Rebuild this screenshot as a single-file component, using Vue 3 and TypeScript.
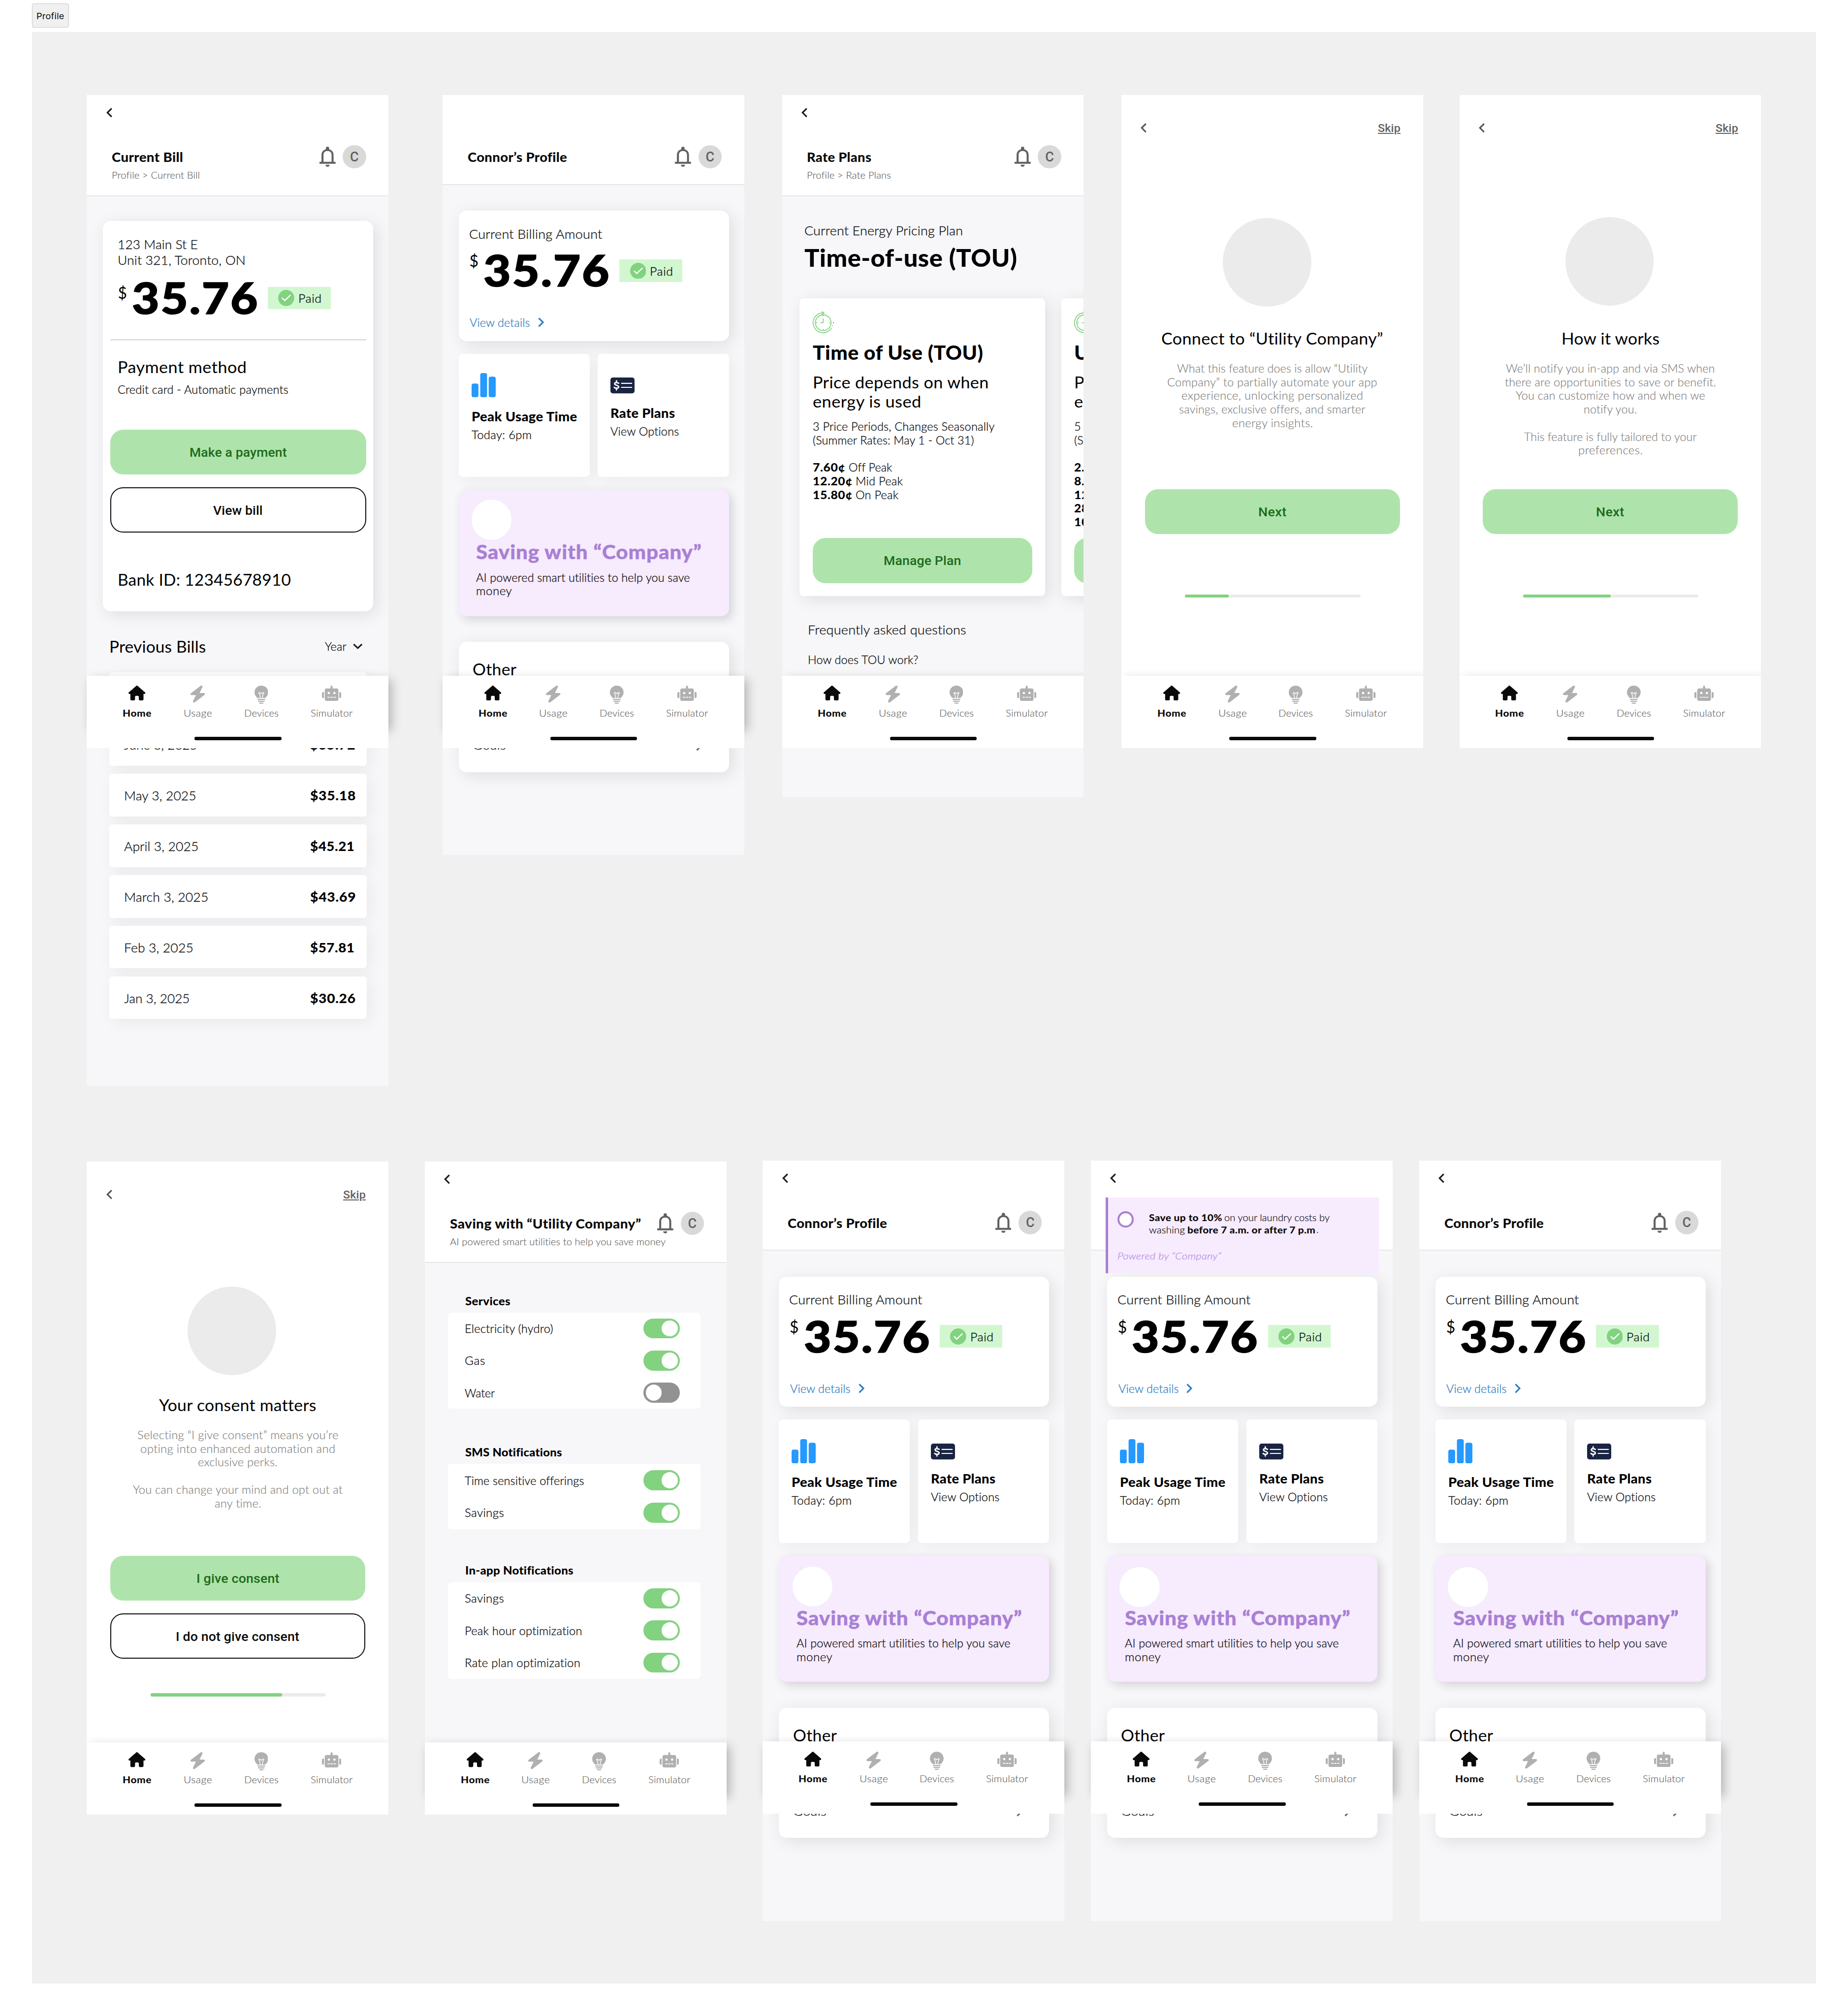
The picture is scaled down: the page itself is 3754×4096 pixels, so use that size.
<script setup lang="ts">
import { defineComponent, h, type Directive } from 'vue'

type Line = [text: string, width: number]

const canvas = document.createElement('canvas').getContext('2d')!

/** Fits a text run to a pixel width: part of the difference goes into the glyphs, the rest into tracking. */
const vFit: Directive<HTMLElement, number> = {
  mounted(el, { value }) {
    const text = el.textContent ?? ''
    const cs = getComputedStyle(el)
    canvas.font = `${cs.fontStyle} ${cs.fontWeight} 200px ${cs.fontFamily}`
    const m = canvas.measureText(text)
    const target = value / parseFloat(cs.fontSize)
    const ink = (m.actualBoundingBoxRight + m.actualBoundingBoxLeft) / 200
    const stretch = 1 + (target / ink - 1) * 0.65
    const ls = (target / stretch - ink) / Math.max(1, text.length - 1)
    const overhang = target - target / stretch - ls
    el.style.display = 'inline-block'
    el.style.transformOrigin = '0 50%'
    el.style.transform = `translateY(1.2px) scaleX(${stretch.toFixed(4)})`
    el.style.letterSpacing = `${ls.toFixed(4)}em`
    el.style.marginRight = `${overhang.toFixed(4)}em`
  },
}

const tabs = [
  { name: 'Home', w: 69 },
  { name: 'Usage', w: 67 },
  { name: 'Devices', w: 82 },
  { name: 'Simulator', w: 103 },
]

const TabIcon = defineComponent({
  props: { name: { type: String, required: true } },
  setup(props) {
    return () => {
      switch (props.name) {
        case 'Home':
          return h('svg', { width: 42, height: 37, viewBox: '0 0 576 512', preserveAspectRatio: 'none', fill: '#0a0a0a' }, [
            h('path', { d: 'M575.8 255.5c0 18-15 32.1-32 32.1h-32l.7 160.2c0 2.7-.2 5.4-.5 8.1V472c0 22.1-17.9 40-40 40H456c-1.1 0-2.2 0-3.3-.1c-1.4 .1-2.8 .1-4.2 .1H416 392c-22.1 0-40-17.9-40-40V448 384c0-17.7-14.3-32-32-32H256c-17.7 0-32 14.3-32 32v64 24c0 22.1-17.9 40-40 40H160 128.1c-1.5 0-3-.1-4.5-.2c-1.2 .1-2.4 .2-3.6 .2H104c-22.1 0-40-17.9-40-40V360c0-.9 0-1.9 .1-2.8V287.6H32c-18 0-32-14-32-32.1c0-9 3-17 10-24L266.4 8c7-7 15-8 22-8s15 2 21 7L564.8 231.5c8 7 12 15 11 24z' }),
          ])
        case 'Usage':
          return h('svg', { width: 36, height: 42, viewBox: '32 0 384 512', preserveAspectRatio: 'none', fill: '#b0b0b0' }, [
            h('path', { d: 'M349.4 44.6c5.9-13.7 1.5-29.7-10.6-38.5s-28.6-8-39.9 1.8l-256 224c-10 8.8-13.6 22.9-8.9 35.3S50.7 288 64 288H175.5L98.6 467.4c-5.9 13.7-1.5 29.7 10.6 38.5s28.6 8 39.9-1.8l256-224c10-8.8 13.6-22.9 8.9-35.3s-16.6-20.7-30-20.7H272.5L349.4 44.6z' }),
          ])
        case 'Devices':
          return h('svg', { width: 34, height: 46, viewBox: '0 0 34 46', fill: '#b0b0b0' }, [
            h('path', { d: 'M17 0C7.6 0 0 7.2 0 16.4c0 6.2 3 10.4 7.6 14.6H26.4C31 26.8 34 22.6 34 16.4 34 7.2 26.4 0 17 0Z' }),
            h('path', { d: 'M14.500 31 12.800 21.500 10.500 18.500c1.500-2.500 4-1 6.500 1.800 2.500-2.800 5-4.300 6.500-1.800L21.200 21.500 19.500 31', fill: 'none', stroke: '#fff', 'stroke-width': 1.8 }),
            h('path', { d: 'M8.500 34.400H25.500M10 39H24M13 43.600H21', stroke: '#b0b0b0', 'stroke-width': 2.8, 'stroke-linecap': 'round' }),
          ])
        default:
          return h('svg', { width: 48, height: 38, viewBox: '0 0 48 38', fill: '#b0b0b0' }, [
            h('rect', { x: 7, y: 7, width: 34, height: 31, rx: 5 }),
            h('rect', { x: 21.5, y: 0, width: 5, height: 10, rx: 2.5 }),
            h('path', { d: 'M5 16v15H3.500A3.500 3.500 0 0 1 0 27.500v-8A3.500 3.500 0 0 1 3.500 16ZM43 16v15h1.500a3.500 3.500 0 0 0 3.500-3.500v-8a3.500 3.500 0 0 0-3.500-3.500Z' }),
            h('circle', { cx: 17, cy: 18.5, r: 3, fill: '#fff' }),
            h('circle', { cx: 31, cy: 18.5, r: 3, fill: '#fff' }),
            h('path', { d: 'M14.500 29h4M22 29h4M29.500 29h4', stroke: '#fff', 'stroke-width': 2.2, 'stroke-linecap': 'round' }),
          ])
      }
    }
  },
})

const Chevron = defineComponent({
  props: { dir: { type: String, default: 'left' }, color: { type: String, default: '#1c1b1f' } },
  setup(props) {
    const shapes: Record<string, [number, number, string]> = {
      left: [15, 24, 'M13.200 1.600 2.800 12 13.200 22.400'],
      right: [15, 24, 'M1.800 1.600 12.200 12 1.800 22.400'],
      down: [24, 15, 'M1.800 2.200 12 12 22.200 2.200'],
    }
    return () => {
      const [w, ht, d] = shapes[props.dir]
      return h('svg', { width: w, height: ht, viewBox: `0 0 ${w} ${ht}`, style: 'display:block' }, [
        h('path', { d, fill: 'none', stroke: props.color, 'stroke-width': 3.9 }),
      ])
    }
  },
})

interface Screen {
  id: number
  kind: 'bill' | 'profile' | 'plans' | 'intro' | 'settings'
  x: number
  y: number
  h: number
  clip?: boolean
  back?: boolean
  title?: Line
  sub?: Line
  banner?: boolean
  heading?: Line
  circle?: [number, number]
  copy?: Line[]
  actions?: Line[]
  progress?: number
  blob?: [number, number]
}

const screens: Screen[] = [
  { id: 1, kind: 'bill', x: 216, y: 236, h: 2464, back: true, title: ['Current Bill', 174.6], sub: ['Profile > Current Bill', 214] },
  { id: 2, kind: 'profile', x: 1100, y: 236, h: 1890, title: ['Connor’s Profile', 245], blob: [72, 24] },
  { id: 3, kind: 'plans', x: 1944, y: 236, h: 1746, clip: true, back: true, title: ['Rate Plans', 157], sub: ['Profile > Rate Plans', 205] },
  {
    id: 4, kind: 'intro', x: 2788, y: 236, h: 1624, clip: true,
    circle: [252, 306], heading: ['Connect to “Utility Company”', 549.6],
    copy: [['What this feature does is allow “Utility', 474], ['Company” to partially automate your app', 522], ['experience, unlocking personalized', 448], ['savings, exclusive offers, and smarter', 461], ['energy insights.', 198]],
    actions: [['Next', 67]], progress: 25,
  },
  {
    id: 5, kind: 'intro', x: 3628, y: 236, h: 1624, clip: true,
    circle: [263, 304], heading: ['How it works', 240],
    copy: [['We’ll notify you in-app and via SMS when', 520], ['there are opportunities to save or benefit.', 523], ['You can customize how and when we', 471], ['notify you.', 130], ['', 0], ['This feature is fully tailored to your', 430], ['preferences.', 156]],
    actions: [['Next', 67]], progress: 50,
  },
  {
    id: 6, kind: 'intro', x: 216, y: 2888, h: 1624, clip: true,
    circle: [250, 311], heading: ['Your consent matters', 389],
    copy: [['Selecting “I give consent” means you’re', 499], ['opting into enhanced automation and', 482], ['exclusive perks.', 194.5], ['', 0], ['You can change your mind and opt out at', 522], ['any time.', 114]],
    actions: [['I give consent', 203], ['I do not give consent', 304]], progress: 75,
  },
  { id: 7, kind: 'settings', x: 1056, y: 2888, h: 1624, back: true, title: ['Saving with “Utility Company”', 476], sub: ['AI powered smart utilities to help you save money', 537] },
  { id: 8, kind: 'profile', x: 1896, y: 2886, h: 1890, back: true, title: ['Connor’s Profile', 245], blob: [74, 27] },
  { id: 9, kind: 'profile', x: 2712, y: 2886, h: 1890, back: true, banner: true, title: ['Connor’s Profile', 245], blob: [71, 28] },
  { id: 10, kind: 'profile', x: 3528, y: 2886, h: 1890, back: true, title: ['Connor’s Profile', 245], blob: [71, 28] },
]

const bills: { date: Line; amount: Line }[] = [
  { date: ['July 3, 2025', 168], amount: ['$41.07', 111] },
  { date: ['June 3, 2025', 179.6], amount: ['$35.72', 110] },
  { date: ['May 3, 2025', 174.6], amount: ['$35.18', 111] },
  { date: ['April 3, 2025', 182.5], amount: ['$45.21', 107.5] },
  { date: ['March 3, 2025', 204], amount: ['$43.69', 111] },
  { date: ['Feb 3, 2025', 166.6], amount: ['$57.81', 107.5] },
  { date: ['Jan 3, 2025', 160.7], amount: ['$30.26', 111] },
]

const plans: { name: Line; lead: Line[]; periods: Line[]; rates: { price: Line; label: Line }[] }[] = [
  {
    name: ['Time of Use (TOU)', 422],
    lead: [['Price depends on when', 432], ['energy is used', 266]],
    periods: [['3 Price Periods, Changes Seasonally', 450], ['(Summer Rates: May 1 - Oct 31)', 399]],
    rates: [
      { price: ['7.60¢', 78], label: ['Off Peak', 105.5] },
      { price: ['12.20¢', 95.5], label: ['Mid Peak', 114] },
      { price: ['15.80¢', 95.5], label: ['On Peak', 104.5] },
    ],
  },
  {
    name: ['Ultra-Low Overnight', 480],
    lead: [['Price depends on when', 432], ['energy is used', 266]],
    periods: [['5 Price Periods, Changes Seasonally', 450], ['(Summer Rates: May 1 - Oct 31)', 399]],
    rates: [
      { price: ['2.80¢', 78], label: ['Overnight', 120] },
      { price: ['8.70¢', 78], label: ['Off Peak', 105.5] },
      { price: ['12.20¢', 95.5], label: ['Mid Peak', 114] },
      { price: ['28.60¢', 95.5], label: ['On Peak', 104.5] },
      { price: ['10.30¢', 95.5], label: ['Tier', 50] },
    ],
  },
]

const groups: { name: Line; tall: number; rows: { label: Line; on: boolean }[] }[] = [
  { name: ['Services', 111], tall: 238, rows: [{ label: ['Electricity (hydro)', 216], on: true }, { label: ['Gas', 47.6], on: true }, { label: ['Water', 74], on: false }] },
  { name: ['SMS Notifications', 240], tall: 162, rows: [{ label: ['Time sensitive offerings', 294.5], on: true }, { label: ['Savings', 95], on: true }] },
  { name: ['In-app Notifications', 266.7], tall: 240, rows: [{ label: ['Savings', 95], on: true }, { label: ['Peak hour optimization', 288.6], on: true }, { label: ['Rate plan optimization', 283.4], on: true }] },
]
</script>

<template>
  <main class="page">
    <div class="tag"><span v-fit="66">Profile</span></div>
    <div class="board">
      <section
        v-for="s in screens"
        :key="s.id"
        class="screen"
        :class="[s.kind, { clip: s.clip }]"
        :style="{ left: s.x - 80 + 'px', top: s.y - 80 + 'px', height: s.h + 'px' }"
      >
        <header v-if="s.title" class="head" :class="{ tall: s.sub }">
          <div class="back"><Chevron v-if="s.back" /></div>
          <div v-if="!s.banner" class="head-row">
            <h1><span v-fit="s.title[1]">{{ s.title[0] }}</span></h1>
            <svg class="bell" width="40" height="50" viewBox="0 0 40 50" fill="#616161">
              <path d="M0 37.500H5V20.500C5 13 9.500 8 16 6.300V4a4 4 0 0 1 8 0V6.300C30.500 8 35 13 35 20.500V37.500H40V42.500H0ZM10 37.500H30V20.500C30 14.500 26 10.800 20 10.800S10 14.500 10 20.500Z" fill-rule="evenodd" />
              <path d="M15 45H25A5 5 0 0 1 15 45Z" />
            </svg>
            <span class="avatar">C</span>
          </div>
          <p v-if="s.sub" class="sub"><span v-fit="s.sub[1]">{{ s.sub[0] }}</span></p>
        </header>

        <template v-if="s.kind === 'bill'">
          <div class="card invoice">
            <p class="t32"><span v-fit="194.5">123 Main St E</span></p>
            <p class="t32"><span v-fit="313">Unit 321, Toronto, ON</span></p>
            <div class="amount">
              <span class="cur">$</span>
              <strong><span v-fit="307">35.76</span></strong>
              <span class="paid">
                <svg width="40" height="40" viewBox="0 0 40 40"><circle cx="20" cy="20" r="20" fill="#82d280" /><path d="M10.500 20.500 16.500 26.500 30 13.500" fill="none" stroke="#fff" stroke-width="3" stroke-linecap="round" stroke-linejoin="round" /></svg>
                <span v-fit="52">Paid</span>
              </span>
            </div>
            <hr />
            <p class="t40"><span v-fit="314">Payment method</span></p>
            <p class="t28 method"><span v-fit="423">Credit card - Automatic payments</span></p>
            <button class="btn fill"><span v-fit="239">Make a payment</span></button>
            <button class="btn line"><span v-fit="121">View bill</span></button>
            <p class="t40 bank"><span v-fit="426">Bank ID: 12345678910</span></p>
          </div>
          <div class="prev">
            <h2 class="t40"><span v-fit="235">Previous Bills</span></h2>
            <span class="year t28"><span v-fit="53">Year</span></span>
            <Chevron dir="down" />
          </div>
          <ul class="bills">
            <li v-for="b in bills" :key="b.date[0]">
              <span v-fit="b.date[1]" class="date">{{ b.date[0] }}</span>
              <b><span v-fit="b.amount[1]">{{ b.amount[0] }}</span></b>
            </li>
          </ul>
        </template>

        <template v-else-if="s.kind === 'profile'">
          <div class="card billing">
            <p class="t32"><span v-fit="330">Current Billing Amount</span></p>
            <div class="amount up">
              <span class="cur">$</span>
              <strong><span v-fit="307">35.76</span></strong>
              <span class="paid">
                <svg width="40" height="40" viewBox="0 0 40 40"><circle cx="20" cy="20" r="20" fill="#82d280" /><path d="M10.500 20.500 16.500 26.500 30 13.500" fill="none" stroke="#fff" stroke-width="3" stroke-linecap="round" stroke-linejoin="round" /></svg>
                <span v-fit="52">Paid</span>
              </span>
            </div>
            <a class="details"><span v-fit="149">View details</span><Chevron dir="right" color="#2f7dc4" /></a>
          </div>
          <div class="tiles">
            <div class="tile">
              <svg width="60" height="60" viewBox="0 0 60 60" fill="#2699ff"><rect x="0" y="26" width="17" height="34" rx="5" /><rect x="21.500" y="0" width="17" height="60" rx="5" /><rect x="42.500" y="9" width="17.500" height="51" rx="5" /></svg>
              <h3><span v-fit="260">Peak Usage Time</span></h3>
              <p class="t28"><span v-fit="147">Today: 6pm</span></p>
            </div>
            <div class="tile">
              <svg width="60" height="52" viewBox="0 0 60 52"><rect y="11" width="60" height="39.500" rx="6" fill="#1a2442" /><path d="M27.500 25.500H53M27.500 35.500H53" stroke="#fff" stroke-width="2.600" stroke-linecap="round" /><path d="M20.500 25.500C18.500 23.500 10.500 22.500 10.500 26.500 10.500 31 20.500 29.500 20.500 34.500 20.500 38.500 12 38.500 9.500 35.500M15 19V23M15 38V42" fill="none" stroke="#fff" stroke-width="3.400" stroke-linecap="round" /></svg>
              <h3><span v-fit="157">Rate Plans</span></h3>
              <p class="t28"><span v-fit="170">View Options</span></p>
            </div>
          </div>
          <div class="promo">
            <i class="blob" :style="{ left: s.blob![0] - 40 + 'px', top: s.blob![1] + 'px' }"></i>
            <h3><span v-fit="559">Saving with “Company”</span></h3>
            <p class="t28"><span v-fit="532">AI powered smart utilities to help you save</span></p>
            <p class="t28"><span v-fit="86">money</span></p>
          </div>
          <div class="card other">
            <h2 class="t40"><span v-fit="107">Other</span></h2>
            <div class="goal t32"><span v-fit="79.6">Goals</span><Chevron dir="right" color="#666" /></div>
          </div>
          <aside v-if="s.banner" class="banner">
            <i class="ring"></i>
            <div class="tip">
              <p><b v-fit="180.600">Save up to 10%</b><span v-fit="262">on your laundry costs by</span></p>
              <p><span v-fit="88">washing</span><b v-fit="316">before 7 a.m. or after 7 p.m</b><span class="dot">.</span></p>
            </div>
            <em><span v-fit="256.600">Powered by “Company”</span></em>
          </aside>
        </template>

        <template v-else-if="s.kind === 'plans'">
          <div class="now">
            <p class="t32"><span v-fit="391">Current Energy Pricing Plan</span></p>
            <h2><span v-fit="526">Time-of-use (TOU)</span></h2>
          </div>
          <div class="deck">
            <article v-for="p in plans" :key="p.name[0]" class="plan">
              <svg width="54" height="54" viewBox="0 0 54 54" fill="none" stroke="#82d280" stroke-width="2.200">
                <circle cx="26" cy="29" r="19.500" />
                <path d="M27 4.500A24.700 24.700 0 1 0 47 41.500M22.500 1 28 5 23 8M49 37.500 50 35M51.500 31.500V27" />
                <path d="M26 18V29H19M26 9.500V13M26 45V48.500M6.500 29H11M41 29H45.500" />
              </svg>
              <h3><span v-fit="p.name[1]">{{ p.name[0] }}</span></h3>
              <p v-for="l in p.lead" :key="l[0]" class="t40"><span v-fit="l[1]">{{ l[0] }}</span></p>
              <div class="periods">
                <p v-for="l in p.periods" :key="l[0]" class="t28"><span v-fit="l[1]">{{ l[0] }}</span></p>
              </div>
              <div class="rates">
                <p v-for="r in p.rates" :key="r.price[0]" class="t28"><b v-fit="r.price[1]">{{ r.price[0] }}</b><span v-fit="r.label[1]">{{ r.label[0] }}</span></p>
              </div>
              <button class="btn fill"><span v-fit="188.500">Manage Plan</span></button>
            </article>
          </div>
          <div class="faq">
            <p class="t32"><span v-fit="390.500">Frequently asked questions</span></p>
            <p class="t28"><span v-fit="272.600">How does TOU work?</span></p>
          </div>
        </template>

        <template v-else-if="s.kind === 'intro'">
          <div class="intro-top"><Chevron color="#555" /><a><span v-fit="54">Skip</span></a></div>
          <i class="disc" :style="{ left: s.circle![0] + 'px', top: s.circle![1] + 'px' }"></i>
          <h2 class="t40"><span v-fit="s.heading![1]">{{ s.heading![0] }}</span></h2>
          <div class="copy">
            <p v-for="(l, i) in s.copy" :key="i" class="t28"><span v-if="l[0]" v-fit="l[1]">{{ l[0] }}</span></p>
          </div>
          <div class="actions">
            <button v-for="(a, i) in s.actions" :key="a[0]" class="btn" :class="i ? 'line' : 'fill'"><span v-fit="a[1]">{{ a[0] }}</span></button>
          </div>
          <div class="progress" :class="{ late: s.actions!.length > 1 }"><i :style="{ width: s.progress + '%' }"></i></div>
        </template>

        <div v-else class="groups">
          <div v-for="g in groups" :key="g.name[0]" class="group">
            <h4><span v-fit="g.name[1]">{{ g.name[0] }}</span></h4>
            <ul :style="{ height: g.tall + 'px' }">
              <li v-for="r in g.rows" :key="r.label[0]" class="t28">
                <span v-fit="r.label[1]">{{ r.label[0] }}</span>
                <i class="toggle" :class="{ on: r.on }"></i>
              </li>
            </ul>
          </div>
        </div>

        <nav class="nav">
          <i class="nav-shade"></i>
          <div class="nav-body">
            <div class="tabs">
              <div v-for="(t, i) in tabs" :key="t.name" class="tab" :class="{ active: i === 0 }">
                <div class="tab-icon"><TabIcon :name="t.name" /></div>
                <span v-fit="t.w">{{ t.name }}</span>
              </div>
            </div>
            <i class="indicator"></i>
          </div>
        </nav>
      </section>
    </div>
  </main>
</template>

<style>
body {
  background: #fff;
  overflow: hidden;
}
</style>

<style scoped>
.page {
  zoom: 0.81715;
  width: 4594px;
  height: 5012px;
  box-sizing: border-box;
  padding-left: 80px;
  background: #fff;
  color: #0a0a0a;
  font-family: Lato, 'Open Sans', sans-serif;
}
.page * {
  box-sizing: border-box;
}
h1, h2, h3, h4, p, ul {
  margin: 0;
  padding: 0;
  list-style: none;
}
span, b {
  white-space: pre;
}
svg {
  flex: none;
}
.tag {
  width: 91px;
  height: 60px;
  margin-top: 8px;
  margin-bottom: 12px;
  display: flex;
  align-items: center;
  justify-content: center;
  border: 1.5px solid #c8c8c8;
  border-radius: 4px;
  background: #f0f0f0;
  font: 400 21px Inter, sans-serif;
  float: left;
}
.board {
  clear: both;
  position: relative;
  width: 4434px;
  height: 4852px;
  background: #f0f0f0;
}
.screen {
  position: absolute;
  width: 750px;
  background: #f7f7f9;
}
.screen.intro {
  background: #fff;
}
.clip {
  overflow: hidden;
}

.t40 { font-size: 40px; line-height: 48px; font-weight: 400; color: #000; }
.t32 { font-size: 32px; line-height: 40px; font-weight: 300; -webkit-text-stroke: 0.4px; }
.t28 { font-size: 28px; line-height: 34px; font-weight: 300; -webkit-text-stroke: 0.4px; }
h1, h3, h4, strong, b, .now h2, .tab.active {
  font-weight: 900;
  -webkit-text-stroke: 0;
}

.head {
  height: 224px;
  padding-top: 32px;
  background: #fff;
  border-bottom: 2.5px solid #e6e6e8;
}
.head.tall {
  height: 252px;
}
.back {
  height: 93px;
  padding-left: 48px;
}
.head-row {
  display: flex;
  align-items: center;
  height: 58px;
  padding: 0 56px 0 62px;
}
.head-row h1 {
  flex: 1;
  font-size: 32px;
  line-height: 40px;
}
.bell {
  margin-right: 18px;
}
.avatar {
  flex: none;
  width: 58px;
  height: 58px;
  border-radius: 50%;
  background: #d9d9d9;
  color: #616161;
  font: 500 33px/59px Roboto, sans-serif;
  text-align: center;
}
.sub {
  padding: 1px 0 0 62px;
  font-size: 24px;
  line-height: 30px;
  font-weight: 300;
  color: #606060;
  -webkit-text-stroke: 0.2px;
}

.card {
  width: 672px;
  margin-left: 40px;
  border-radius: 20px;
  background: #fff;
  box-shadow: 8px 8px 40px rgba(0, 0, 0, 0.1);
}
.invoice {
  margin-top: 62px;
  height: 970px;
  padding: 36px 18px 0;
}
.invoice > p {
  padding-left: 18px;
}
.amount {
  display: flex;
  height: 140px;
  padding-left: 19px;
  color: #000;
}
.cur {
  width: 35px;
  padding-top: 39px;
  font-size: 39px;
  line-height: 48px;
}
.amount strong {
  width: 338px;
  font-size: 108px;
  line-height: 130px;
  padding-top: 7px;
  -webkit-text-stroke: 2px;
}
.paid {
  display: flex;
  align-items: center;
  width: 156px;
  height: 56px;
  margin-top: 47px;
  padding-left: 26px;
  gap: 10px;
  background: #d2f7d0;
  font-size: 28px;
  font-weight: 300;
  -webkit-text-stroke: 0.4px;
}
.invoice hr {
  margin: 39px 0 40.5px;
  border: 0;
  border-top: 1.3px solid #a5a5a5;
}
.invoice .method {
  margin-top: 16px;
}
.btn {
  display: block;
  width: 100%;
  height: 112px;
  border: 0;
  border-radius: 32px;
  font: 500 32px/112px Roboto, sans-serif;
  padding: 0;
}
.btn.fill {
  background: #aee4ab;
  color: #1d6a1a;
}
.btn.line {
  border: 2.5px solid #0a0a0a;
  background: #fff;
  color: #0a0a0a;
  line-height: 108px;
}
.invoice .fill {
  margin-top: 83.5px;
}
.invoice .line {
  margin-top: 32px;
}
.invoice .bank {
  margin-top: 91.5px;
}
.prev {
  display: flex;
  align-items: center;
  margin-top: 63px;
  height: 48px;
  padding: 0 64px 0 56px;
}
.prev h2 {
  flex: 1;
}
.year {
  margin-right: 17px;
}
.bills {
  margin: 41px 0 0 56px;
  width: 640px;
  display: flex;
  flex-direction: column;
  gap: 20px;
}
.bills li {
  display: flex;
  align-items: center;
  height: 106px;
  padding-left: 36px;
  border-radius: 8px;
  background: #fff;
  box-shadow: 8px 8px 40px rgba(0, 0, 0, 0.06);
  font-size: 32px;
  line-height: 40px;
}
.bills .date {
  font-weight: 300;
  -webkit-text-stroke: 0.4px;
}
.bills b {
  margin-left: auto;
  width: 141px;
  color: #000;
}

.billing {
  margin-top: 64px;
  height: 324px;
  padding-top: 36px;
}
.billing > p {
  padding-left: 26px;
}
.billing .amount {
  height: 124px;
  margin-top: -2px;
  padding-left: 27px;
}
.up .cur {
  padding-top: 28px;
}
.billing .amount strong {
  padding-top: 7px;
}
.details {
  display: flex;
  align-items: center;
  gap: 20px;
  margin-top: 63px;
  padding-left: 28px;
  font-size: 28px;
  line-height: 34px;
  font-weight: 300;
  -webkit-text-stroke: 0.4px;
  color: #2f7dc4;
}
.tiles {
  display: flex;
  gap: 20px;
  margin: 32px 38px 0 40px;
}
.tile {
  flex: 1;
  height: 306px;
  padding: 48px 0 0 32px;
  border-radius: 10px;
  background: #fff;
  box-shadow: 8px 8px 40px rgba(0, 0, 0, 0.05);
}
.tile svg {
  display: block;
}
.tile h3 {
  margin-top: 26px;
  font-size: 32px;
  line-height: 40px;
  color: #000;
}
.tile .t28 {
  margin-top: 9px;
}
.promo {
  position: relative;
  width: 672px;
  height: 314px;
  margin: 32px 0 0 40px;
  padding: 126px 0 0 44px;
  border-radius: 20px;
  background: #f7ebfe;
  box-shadow: 8px 8px 24px rgba(0, 0, 0, 0.14);
}
.promo h3 {
  font-size: 48px;
  line-height: 54px;
  color: #a880d4;
  -webkit-text-stroke: 0.5px;
}
.promo h3 + .t28 {
  margin-top: 20px;
}
.blob {
  position: absolute;
  width: 100px;
  height: 100px;
  border-radius: 50%;
  background: #fff;
}
.other {
  margin-top: 64px;
  height: 324px;
  padding: 43px 0 0 35px;
}
.goal {
  display: flex;
  align-items: center;
  gap: 473px;
  margin-top: 144px;
}
.goal svg {
  margin-top: 8px;
}
.banner {
  position: absolute;
  left: 36px;
  top: 92px;
  width: 680px;
  height: 188px;
  display: grid;
  grid-template-columns: 78px 1fr;
  grid-template-rows: 95px 30px;
  align-items: start;
  padding: 34px 0 0 24px;
  border-left: 6.5px solid #a880d4;
  background: #f7ebfe;
  font-size: 24px;
  line-height: 30px;
  font-weight: 300;
}
.banner span {
  -webkit-text-stroke: 0.3px;
}
.ring {
  width: 40px;
  height: 40px;
  border: 5px solid #a880d4;
  border-radius: 50%;
  background: #fff;
}
.tip b + span:not(.dot),
.tip span + b {
  position: relative;
  left: 6px;
}
.dot {
  padding-left: 9px;
}
.banner em {
  grid-column: 1 / 3;
  color: #b28be0;
}

.now {
  padding: 64px 0 0 56px;
}
.now h2 {
  margin-top: 11px;
  font-size: 60px;
  line-height: 72px;
  color: #000;
}
.deck {
  display: flex;
  gap: 40px;
  margin: 67px 0 0 44px;
}
.plan {
  flex: none;
  width: 610px;
  height: 740px;
  display: flex;
  flex-direction: column;
  padding: 32px 32px;
  border-radius: 10px;
  background: #fff;
  box-shadow: 8px 8px 40px rgba(0, 0, 0, 0.1);
}
.plan h3 {
  margin: 19.5px 0 21.5px;
  font-size: 48px;
  line-height: 56px;
  color: #000;
}
.periods {
  margin-top: 21.5px;
}
.rates {
  margin-top: 34px;
}
.rates b {
  color: #000;
}
.rates p > span {
  margin-left: 9px;
}
.plan .btn {
  margin-top: auto;
}
.faq {
  padding: 62px 0 0 64px;
}
.faq .t28 {
  margin-top: 39px;
}

.intro-top {
  display: flex;
  justify-content: space-between;
  align-items: center;
  height: 34px;
  margin-top: 65px;
  padding: 0 57px 0 48px;
}
.intro-top a {
  font: 500 28px/34px Roboto, sans-serif;
  color: #616161;
}
.intro-top a span {
  text-decoration: underline;
  text-decoration-thickness: 2px;
  text-underline-offset: 3px;
}
.disc {
  position: absolute;
  width: 220px;
  height: 220px;
  border-radius: 50%;
  background: #ebebeb;
}
.intro h2 {
  margin-top: 481px;
  text-align: center;
}
.copy {
  height: 312px;
  margin-top: 34px;
  text-align: center;
  color: #7c7c7c;
}
.copy p {
  height: 34px;
  -webkit-text-stroke: 0.2px;
}
.actions {
  display: flex;
  flex-direction: column;
  gap: 32px;
  margin: 6px 58px 0;
}
.progress {
  width: 436px;
  height: 8px;
  margin: 150px auto 0 158px;
  border-radius: 4px;
  background: #ebebeb;
}
.progress.late {
  margin-top: 86px;
}
.progress i {
  display: block;
  height: 8px;
  border-radius: 4px;
  background: #82d280;
}

.groups {
  padding: 77px 64px 0 58px;
}
.group + .group {
  margin-top: 91px;
}
.group + .group + .group {
  margin-top: 85px;
}
.group h4 {
  padding-left: 42px;
  font-size: 28px;
  line-height: 34px;
  color: #000;
  margin-bottom: 13px;
}
.group ul {
  width: 628px;
  display: flex;
  flex-direction: column;
  justify-content: center;
  border-radius: 8px;
  background: #fff;
}
.group li {
  flex: none;
  display: flex;
  align-items: center;
  justify-content: space-between;
  height: 80px;
  padding: 0 52px 0 41px;
}
.toggle {
  display: flex;
  width: 90px;
  height: 50px;
  padding: 5px;
  border-radius: 25px;
  background: #929292;
}
.toggle.on {
  justify-content: flex-end;
  background: #82d280;
}
.toggle::after {
  content: '';
  width: 40px;
  height: 40px;
  border-radius: 50%;
  background: #fff;
}

.nav {
  position: absolute;
  isolation: isolate;
  left: 0;
  top: 1444px;
  width: 750px;
  height: 180px;
}
.nav-shade {
  position: absolute;
  inset: 0 0 50px;
  box-shadow: 8px 8px 24px rgba(0, 0, 0, 0.25);
}
.nav-body {
  position: relative;
  height: 180px;
  background: #fff;
}
.tabs {
  display: flex;
  justify-content: space-between;
  height: 152px;
  padding: 25px 90px 0 89px;
}
.tab {
  display: flex;
  flex-direction: column;
  align-items: center;
  font-size: 24px;
  line-height: 30px;
  font-weight: 300;
  color: #616161;
  -webkit-text-stroke: 0.2px;
}
.tab-icon {
  height: 52px;
}
.tab.active {
  color: #0a0a0a;
}
.indicator {
  display: block;
  width: 216px;
  height: 8px;
  margin-left: 268px;
  border-radius: 4px;
  background: #0a0a0a;
}
</style>
